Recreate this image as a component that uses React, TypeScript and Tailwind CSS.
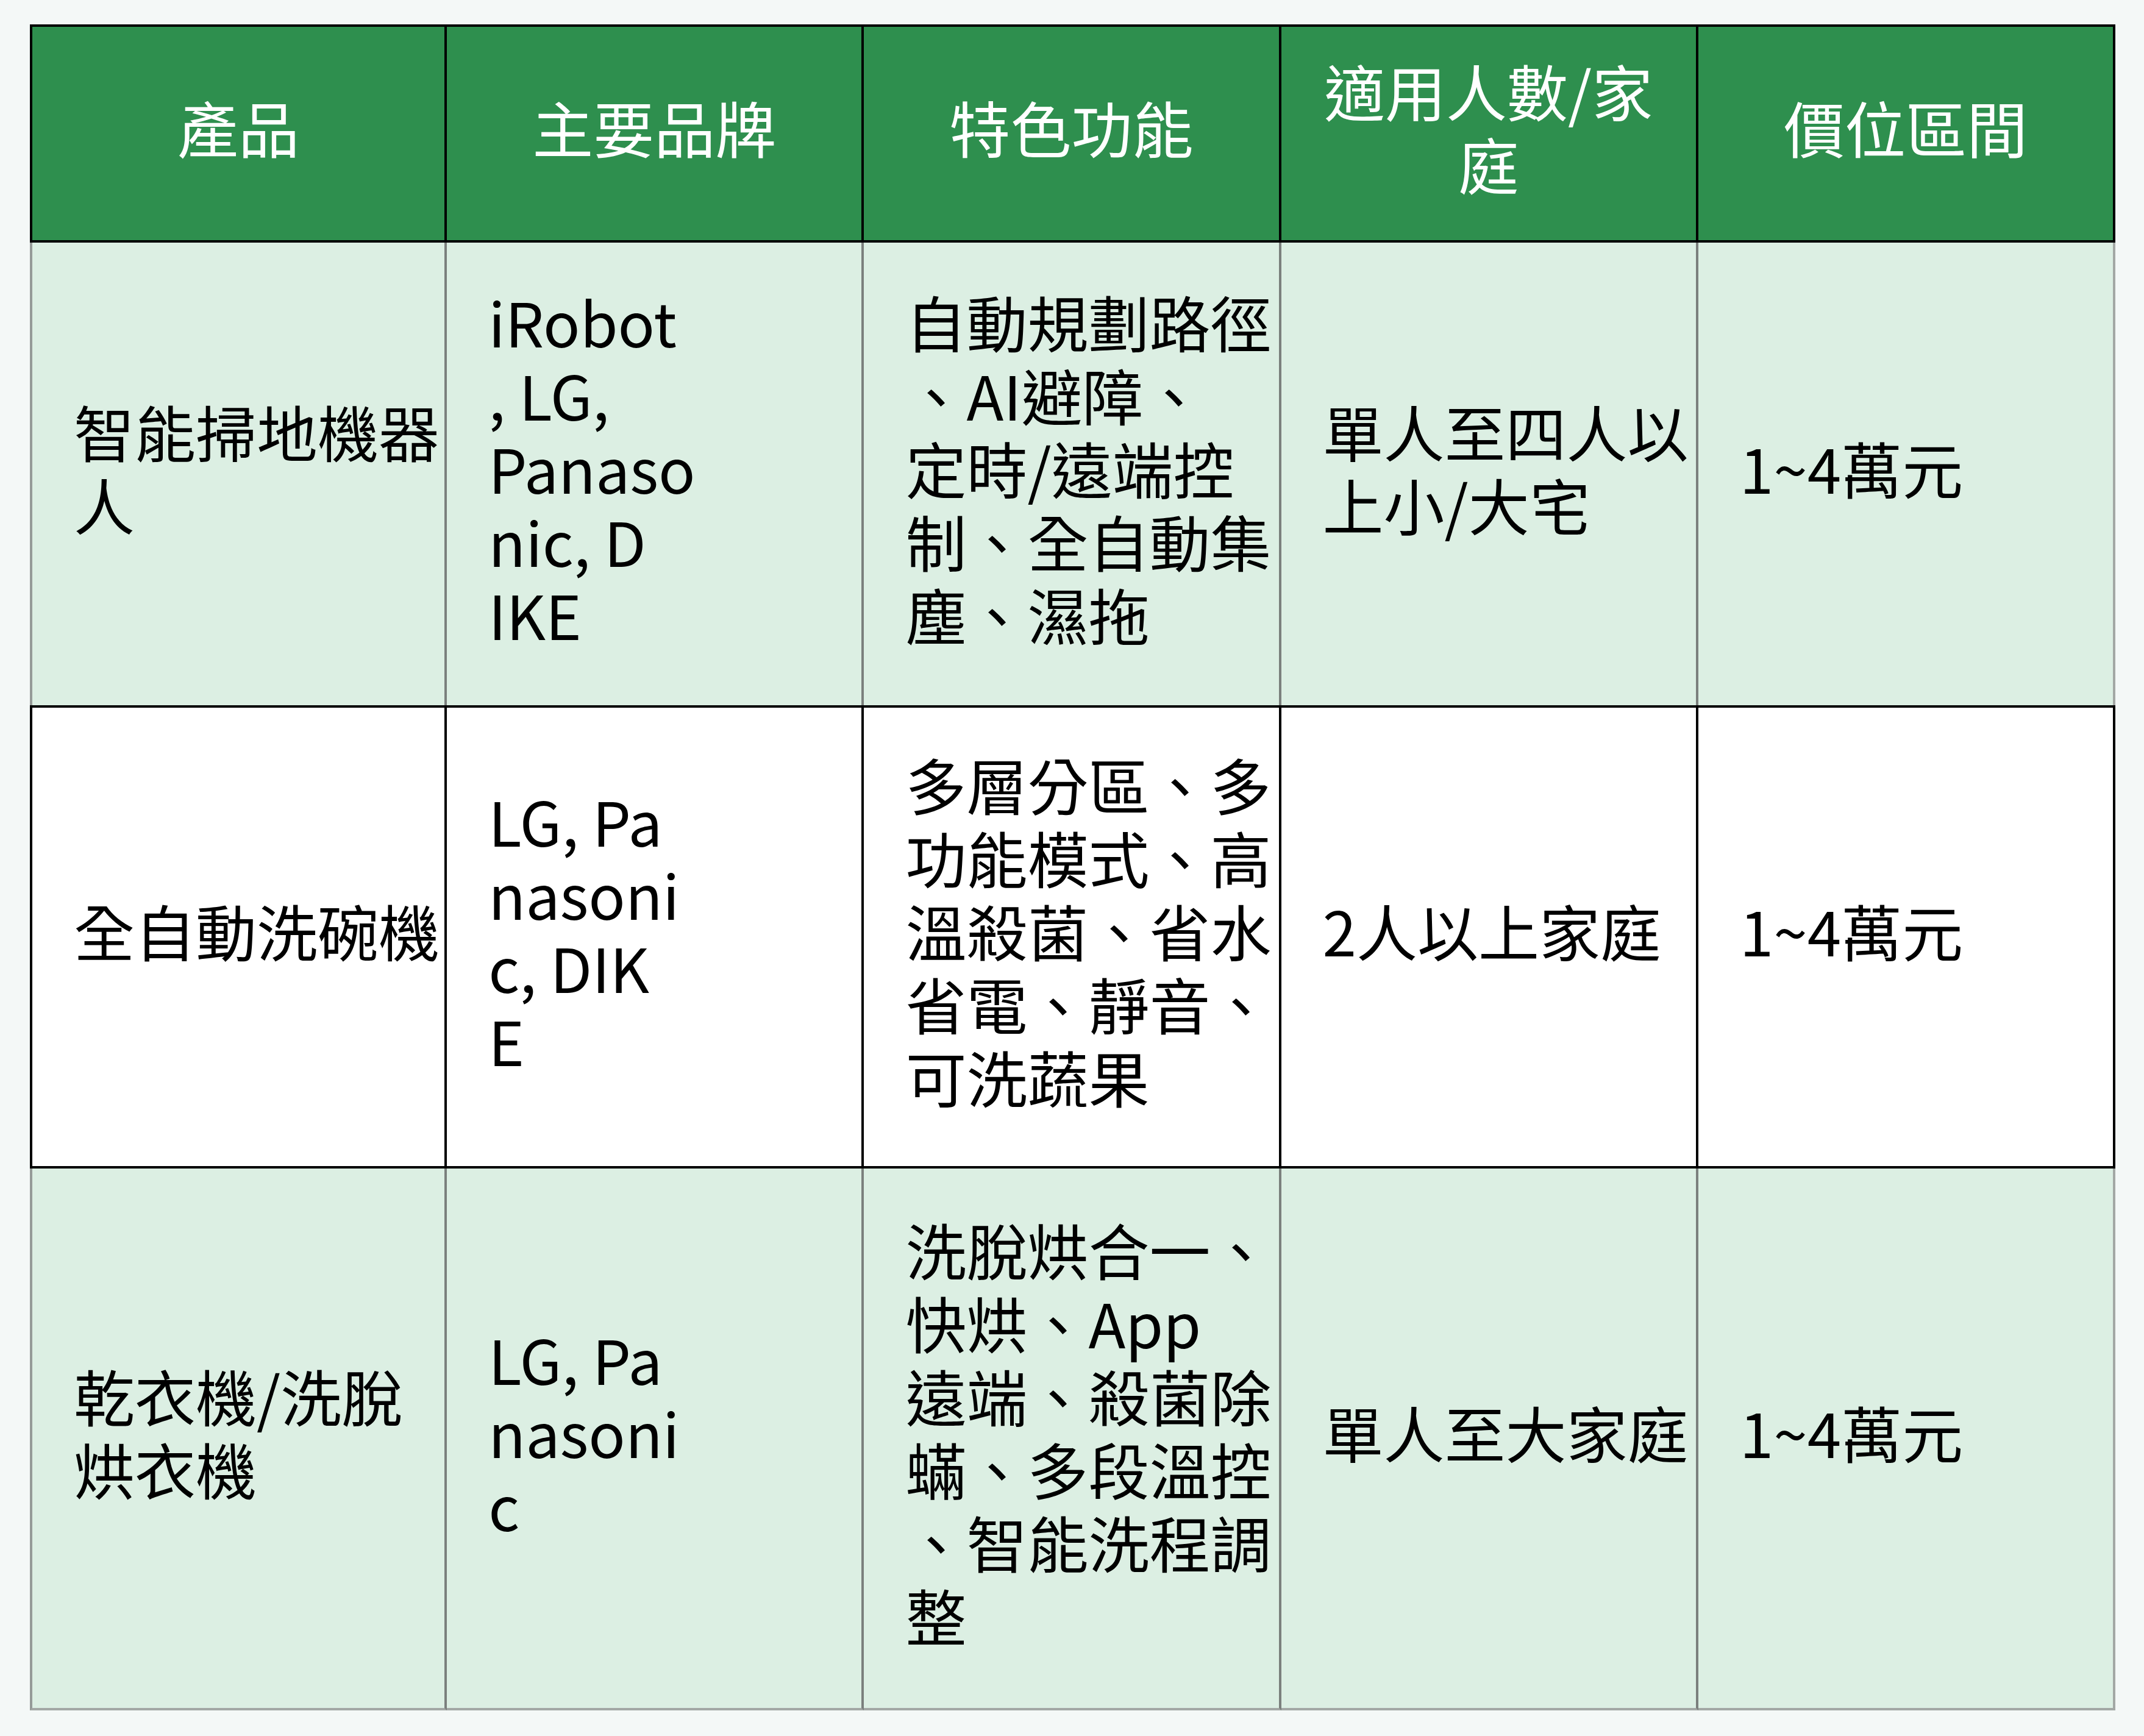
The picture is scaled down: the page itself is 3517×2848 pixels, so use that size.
const font = { fontFamily: '"Noto Sans CJK TC", "Noto Sans CJK SC", sans-serif' };

const headers: string[][] = [
  ["產品"],
  ["主要品牌"],
  ["特色功能"],
  ["適用人數/家", "庭"],
  ["價位區間"],
];

const rows: string[][][] = [
  [
    ["智能掃地機器", "人"],
    ["iRobot", ", LG,", "Panaso", "nic, D", "IKE"],
    ["自動規劃路徑", "、AI避障、", "定時/遠端控", "制、全自動集", "塵、濕拖"],
    ["單人至四人以", "上小/大宅"],
    ["1~4萬元"],
  ],
  [
    ["全自動洗碗機"],
    ["LG, Pa", "nasoni", "c, DIK", "E"],
    ["多層分區、多", "功能模式、高", "溫殺菌、省水", "省電、靜音、", "可洗蔬果"],
    ["2人以上家庭"],
    ["1~4萬元"],
  ],
  [
    ["乾衣機/洗脫", "烘衣機"],
    ["LG, Pa", "nasoni", "c"],
    ["洗脫烘合一、", "快烘、App", "遠端、殺菌除", "蟎、多段溫控", "、智能洗程調", "整"],
    ["單人至大家庭"],
    ["1~4萬元"],
  ],
];

function Lines({ lines }: { lines: string[] }) {
  return (
    <div className="whitespace-pre">
      {lines.map((l, i) => (
        <div key={i}>{l}</div>
      ))}
    </div>
  );
}

export default function App() {
  return (
    <div className="min-h-screen bg-[#f4f8f7] pt-[40px] pl-[49px]" style={font}>
      <div className="grid w-[3421px] grid-cols-5 grid-rows-[358px_759px_760px_889px] text-[100px] leading-[120px]">
        {headers.map((h, i) => (
          <div
            key={i}
            className={`flex items-center justify-center border-y-4 border-r-4 border-black bg-[#2e8f4e] pb-[22px] text-center text-white ${i === 0 ? "border-l-4" : ""}`}
          >
            <Lines lines={h} />
          </div>
        ))}

        {rows[0].map((c, i) => (
          <div
            key={i}
            className={`flex items-center border-r-4 bg-[#dcefe3] pb-[22px] pl-[68px] text-black ${i === 0 ? "border-l-4 border-l-[#959b98]" : ""} ${i === 4 ? "border-r-[#a3a8a5]" : "border-r-[#7b807d]"}`}
          >
            <Lines lines={c} />
          </div>
        ))}

        {rows[1].map((c, i) => (
          <div
            key={i}
            className={`flex items-center border-y-4 border-r-4 border-black bg-white pb-[22px] pl-[68px] text-black ${i === 0 ? "border-l-4" : ""}`}
          >
            <Lines lines={c} />
          </div>
        ))}

        {rows[2].map((c, i) => (
          <div
            key={i}
            className={`flex items-center border-r-4 border-b-4 border-b-[#a3a8a5] bg-[#dcefe3] pb-[22px] pl-[68px] text-black ${i === 0 ? "border-l-4 border-l-[#959b98]" : ""} ${i === 4 ? "border-r-[#a3a8a5]" : "border-r-[#7b807d]"}`}
          >
            <Lines lines={c} />
          </div>
        ))}
      </div>
    </div>
  );
}
